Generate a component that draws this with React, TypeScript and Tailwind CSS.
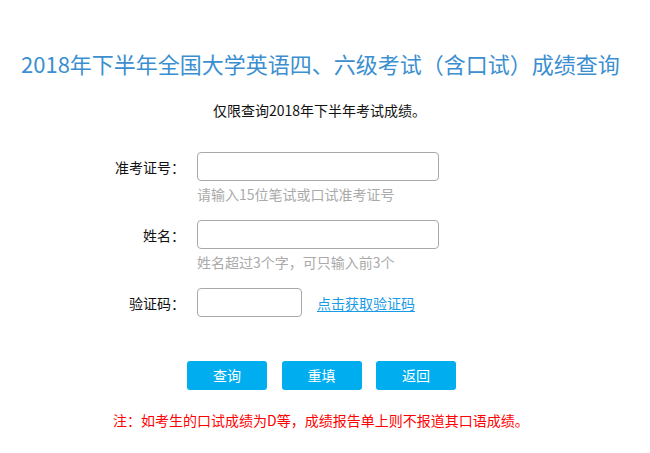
import { useState } from "react";

const FONT = "font-['Microsoft_YaHei','Noto_Sans_CJK_SC',sans-serif]";

function Field({
  label,
  width,
  hint,
  children,
}: {
  label: string;
  width: string;
  hint?: string;
  children?: React.ReactNode;
}) {
  return (
    <div className="flex flex-col">
      <div className="flex items-center">
        <label className="w-[185px] shrink-0 text-right text-[14px] leading-[20px] text-[#111]">
          {label}
        </label>
        <input
          type="text"
          className={`ml-[12px] h-[29px] ${width} rounded-[4px] border border-[#a9a9a9] bg-white px-2 text-[14px] outline-none`}
        />
        {children}
      </div>
      {hint && (
        <div className="mt-[3px] pl-[197px] text-[14px] leading-[20px] text-[#aaaaaa]">{hint}</div>
      )}
    </div>
  );
}

export default function App() {
  const [, setTick] = useState(0);

  return (
    <div lang="zh-CN" className={`min-h-[453px] w-[650px] bg-white ${FONT}`}>
      <h1 className="pt-[48px] pl-[21px] text-[22px] leading-[30px] font-normal whitespace-nowrap text-[#3b8fd0]">
        2018年下半年全国大学英语四、六级考试（含口试）成绩查询
      </h1>
      <p className="mt-[22px] pl-[213px] text-[14px] leading-[20px] text-[#111]">
        仅限查询2018年下半年考试成绩。
      </p>

      <form className="mt-[32px] flex flex-col gap-[16px]" onSubmit={(e) => e.preventDefault()}>
        <Field label="准考证号：" width="w-[242px]" hint="请输入15位笔试或口试准考证号" />
        <Field label="姓名：" width="w-[242px]" hint="姓名超过3个字，可只输入前3个" />
        <Field label="验证码：" width="w-[105px]">
          <a
            href="#"
            className="ml-[15px] text-[14px] leading-[20px] text-[#1a9be6] underline underline-offset-2"
            onClick={(e) => e.preventDefault()}
          >
            点击获取验证码
          </a>
        </Field>
      </form>

      <div className="mt-[44px] flex gap-[14.5px] pl-[187px]">
        {["查询", "重填", "返回"].map((t) => (
          <button
            key={t}
            type="button"
            onClick={() => setTick((n) => n + 1)}
            className="h-[29px] w-[80px] rounded-[3px] bg-[#00aeef] text-[14px] text-white"
          >
            {t}
          </button>
        ))}
      </div>

      <p className="mt-[20px] pl-[113px] text-[14px] leading-[20px] text-[#ff0000]">
        注：如考生的口试成绩为D等，成绩报告单上则不报道其口语成绩。
      </p>
    </div>
  );
}
